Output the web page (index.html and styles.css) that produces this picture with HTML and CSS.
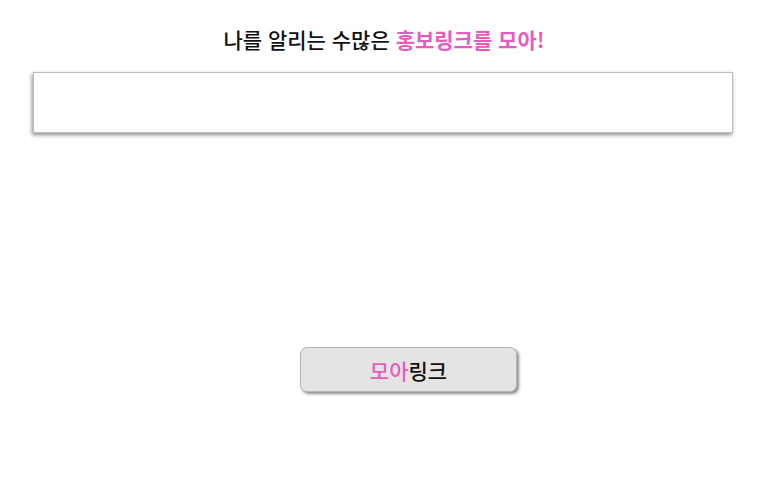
FILE: index.html
```html
<!DOCTYPE html>
<html lang="ko">
<head>
<meta charset="utf-8">
<link rel="stylesheet" href="styles.css">
</head>
<body>
<div class="page">
  <h1 class="title">나를 알리는 수많은 <span class="pink strong">홍보링크를 모아!</span></h1>
  <div class="box"></div>
  <div class="btn-row">
    <button class="btn"><span class="pink">모아</span>링크</button>
  </div>
</div>
</body>
</html>
```
FILE: styles.css
```css
html, body {
  margin: 0;
  padding: 0;
  background: #fff;
}
body {
  font-family: "Noto Sans CJK KR", "Noto Sans", sans-serif;
  color: #111;
}
.page {
  width: 768px;
  height: 480px;
  display: flex;
  flex-direction: column;
}
.title {
  flex-shrink: 0;
  margin: 0;
  padding-top: 24px;
  height: 72px;
  box-sizing: border-box;
  font-size: 21px;
  font-weight: 500;
  line-height: 30px;
  text-align: center;
  letter-spacing: 0;
}
.pink { color: #e55cbf; }
.strong { font-weight: 700; }
.box {
  flex-shrink: 0;
  margin-left: 33px;
  width: 700px;
  height: 61px;
  box-sizing: border-box;
  border: 1px solid #bdbdbd;
  background: #fff;
  box-shadow: -1px 2px 4px rgba(0,0,0,0.45);
}
.btn-row {
  padding-top: 214px;
  padding-left: 300px;
}
.btn {
  width: 217px;
  height: 45px;
  box-sizing: border-box;
  border: 1px solid #b5b5b5;
  border-radius: 7px;
  background: #e4e4e4;
  box-shadow: 2px 2px 3px rgba(0,0,0,0.45);
  font-family: "Noto Sans CJK KR", "Noto Sans", sans-serif;
  font-size: 21px;
  font-weight: 500;
  color: #111;
  padding: 0;
}
```
